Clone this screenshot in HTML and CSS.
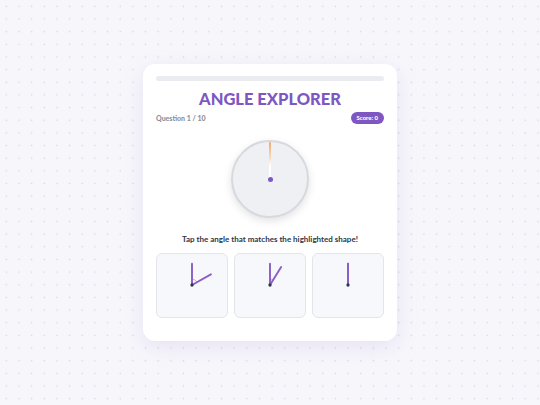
FILE: index.html
```html
<!DOCTYPE html>
<html>
<head>
<meta charset="utf-8">
<link rel="stylesheet" href="styles.css">
</head>
<body>
<main class="card">
  <div class="progress"><div class="progress-fill"></div></div>
  <h1 class="title">ANGLE EXPLORER</h1>
  <div class="meta">
    <span class="question">Question 1 / 10</span>
    <span class="score">Score: 0</span>
  </div>
  <div class="clock-wrap">
    <div class="clock">
      <div class="hand"></div>
      <div class="pivot"></div>
    </div>
  </div>
  <p class="prompt">Tap the angle that matches the highlighted shape!</p>
  <div class="options">
    <button class="option">
      <svg viewBox="0 0 72 65" class="angle">
        <path d="M36 26 A6 6 0 0 1 41.2 29" class="arc"/>
        <line x1="36" y1="32" x2="36" y2="10" class="ray"/>
        <line x1="36" y1="32" x2="55.5" y2="21" class="ray"/>
        <circle cx="36" cy="32" r="1.7" class="vertex"/>
      </svg>
    </button>
    <button class="option">
      <svg viewBox="0 0 72 65" class="angle">
        <path d="M36 26 A6 6 0 0 1 39.2 26.9" class="arc"/>
        <line x1="36" y1="32" x2="36" y2="10" class="ray"/>
        <line x1="36" y1="32" x2="47.5" y2="13.5" class="ray"/>
        <circle cx="36" cy="32" r="1.7" class="vertex"/>
      </svg>
    </button>
    <button class="option">
      <svg viewBox="0 0 72 65" class="angle">
        <line x1="36" y1="32" x2="36" y2="10" class="ray"/>
        <line x1="36" y1="32" x2="36" y2="10" class="ray"/>
        <circle cx="36" cy="32" r="1.7" class="vertex"/>
      </svg>
    </button>
  </div>
</main>
</body>
</html>
```

FILE: styles.css
```css
html, body {
  margin: 0;
  padding: 0;
}
body {
  width: 540px;
  height: 405px;
  background-color: #f7f7fb;
  background-image: radial-gradient(circle, #dcd8e8 0.7px, transparent 1.1px);
  background-size: 12.67px 12.67px;
  display: flex;
  align-items: center;
  justify-content: center;
  font-family: Lato, "Open Sans", sans-serif;
}
.card {
  width: 228px;
  height: 242px;
  padding: 12px 13px 23px;
  background: #ffffff;
  border-radius: 12px;
  box-shadow: 0 6px 22px rgba(126, 87, 194, 0.13);
  display: flex;
  flex-direction: column;
}
.progress {
  height: 5px;
  border-radius: 3px;
  background: #ebecef;
  overflow: hidden;
}
.progress-fill {
  width: 0;
  height: 100%;
}
.title {
  margin: 8px 0 0;
  font-size: 16.5px;
  line-height: 20px;
  font-weight: 900;
  letter-spacing: 0;
  text-align: center;
  color: #7e57c2;
}
.meta {
  margin-top: 3px;
  height: 12px;
  display: flex;
  align-items: center;
  justify-content: space-between;
}
.question {
  font-size: 7px;
  font-weight: 900;
  color: #8d9097;
}
.score {
  height: 12px;
  line-height: 12px;
  padding: 0 6px;
  border-radius: 6px;
  background: #7e57c2;
  color: #ffffff;
  font-size: 6px;
  font-weight: 900;
}
.clock-wrap {
  margin-top: 16px;
  display: flex;
  justify-content: center;
}
.clock {
  position: relative;
  width: 74px;
  height: 74px;
  border: 2px solid #d6d9de;
  border-radius: 50%;
  background: #eef0f3;
  box-shadow: 0 3px 8px rgba(0, 0, 0, 0.12);
}
.hand {
  position: absolute;
  left: 36px;
  top: 0;
  width: 2px;
  height: 37px;
  border-radius: 1px;
  background: linear-gradient(to bottom, #f4a66a 0%, #f8d7bb 40%, #ffffff 65%);
}
.pivot {
  position: absolute;
  left: 34.5px;
  top: 34.5px;
  width: 5px;
  height: 5px;
  border-radius: 50%;
  background: #7e57c2;
}
.prompt {
  margin: 15px 0 0;
  font-size: 8px;
  line-height: 12px;
  font-weight: 700;
  text-align: center;
  color: #2d3748;
}
.options {
  margin-top: 8px;
  display: grid;
  grid-template-columns: repeat(3, 1fr);
  gap: 6px;
}
.option {
  height: 65px;
  padding: 0;
  border: 1px solid #e3e5ea;
  border-radius: 6px;
  background: #f7f8fb;
  display: block;
}
.angle {
  display: block;
  width: 100%;
  height: 100%;
}
.ray {
  stroke: #8b5fc6;
  stroke-width: 2;
  stroke-linecap: round;
}
.arc {
  fill: none;
  stroke: #f6ad6b;
  stroke-width: 1;
}
.vertex {
  fill: #2d3748;
}
```
